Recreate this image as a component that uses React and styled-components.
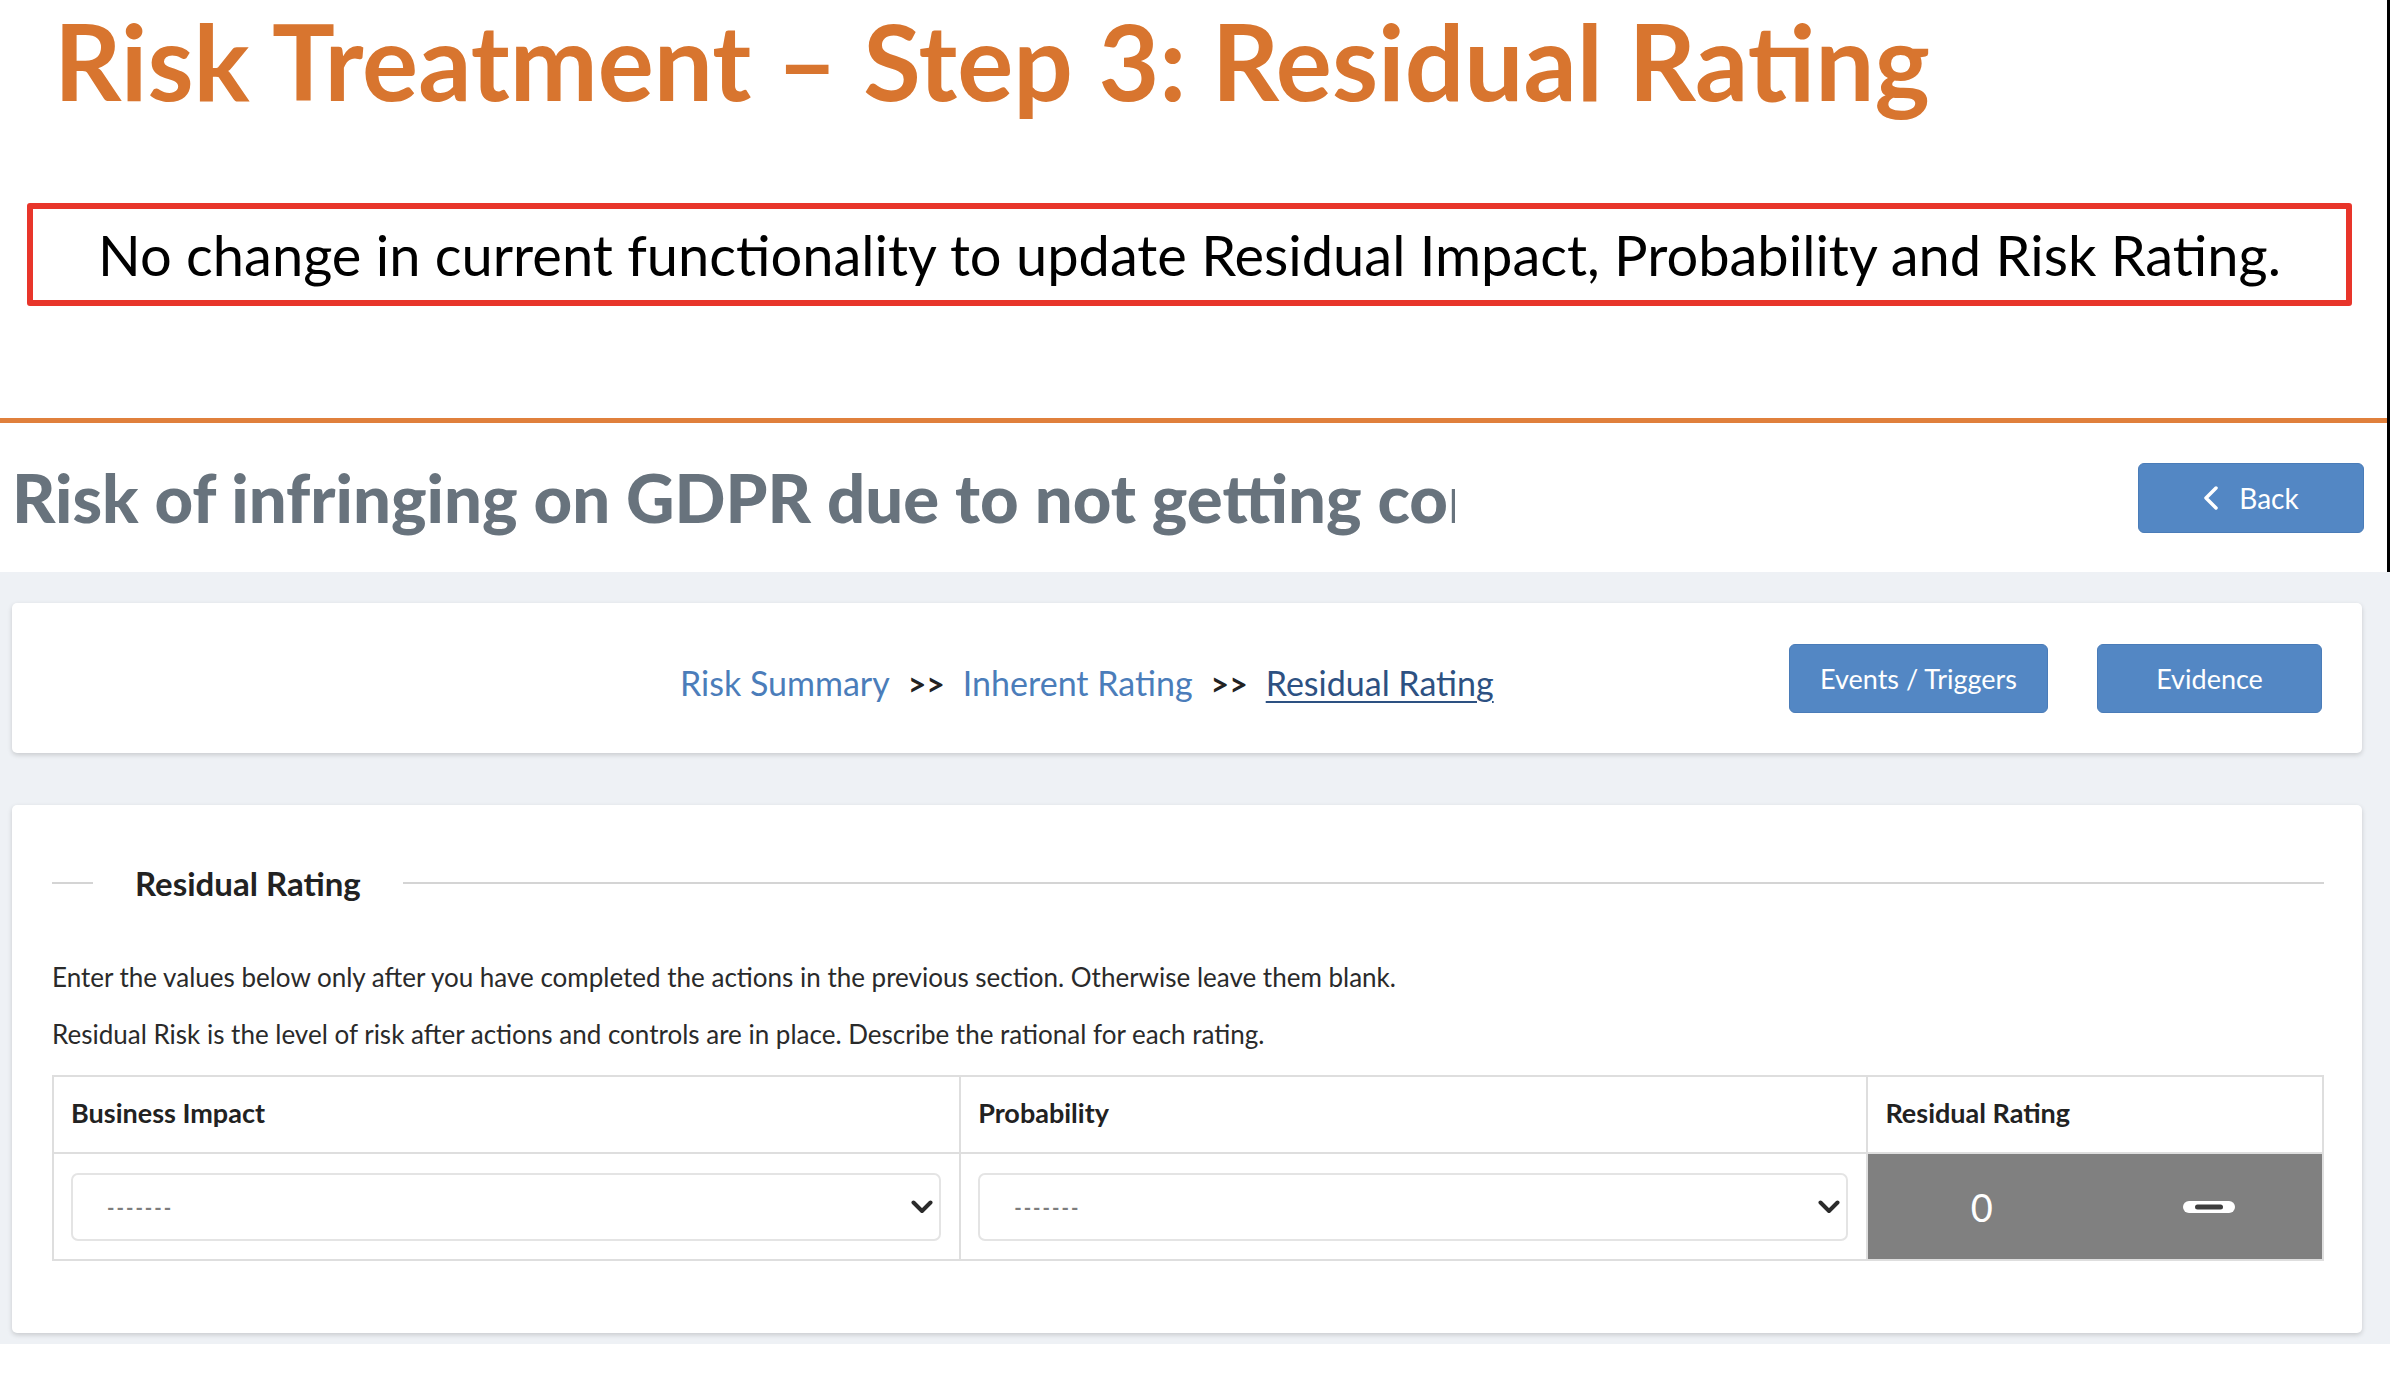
import React from 'react';
import styled, { createGlobalStyle } from 'styled-components';

const GlobalStyle = createGlobalStyle`
  html, body {
    margin: 0;
    padding: 0;
    background: #ffffff;
  }
  body {
    font-family: Lato, "Liberation Sans", sans-serif;
    color: #222;
  }
`;

const Top = styled.div`
  border-right: 3px solid #000;
`;

const Slide = styled.section`
  height: 423px;
  box-sizing: border-box;
  padding-top: 8px;
  border-bottom: 5px solid #e0803c;
`;

const SlideTitle = styled.h1`
  margin: 0 0 0 54px;
  font-size: 105px;
  line-height: 1;
  font-weight: 700;
  color: #d8752f;
  white-space: nowrap;
`;

const NoteBox = styled.div`
  margin: 90px 35px 0 27px;
  height: 103px;
  box-sizing: border-box;
  border: 6px solid #e8352a;
  border-radius: 3px;
  display: flex;
  align-items: center;
  justify-content: center;
  font-size: 56px;
  line-height: 1;
  color: #000;
  white-space: nowrap;
`;

const PageHeader = styled.header`
  height: 149px;
  display: flex;
  align-items: center;
  padding: 0 23px 0 12px;
`;

const RiskTitle = styled.h2`
  margin: 0;
  width: 1443px;
  overflow: hidden;
  white-space: nowrap;
  font-size: 67px;
  line-height: 1.2;
  font-weight: 900;
  color: #68737d;
`;

const Button = styled.button`
  display: flex;
  align-items: center;
  justify-content: center;
  gap: ${p => p.gap || 0}px;
  width: ${p => p.w}px;
  height: ${p => p.h}px;
  margin-left: ${p => (p.ml === 'auto' ? 'auto' : `${p.ml || 0}px`)};
  border: 1px solid #4a7cb8;
  border-radius: 6px;
  background: #5387c4;
  color: #fff;
  font-family: Lato, "Liberation Sans", sans-serif;
  font-size: ${p => p.fs || 27}px;
  padding: 0;
  cursor: pointer;
`;

const Band = styled.main`
  background: #eef1f5;
  padding: 31px 28px 11px 12px;
`;

const Card = styled.div`
  background: #fff;
  border-radius: 5px;
  box-shadow: 0 2px 5px rgba(0, 0, 0, 0.16);
  box-sizing: border-box;
  height: ${p => p.h}px;
  margin-top: ${p => p.mt || 0}px;
`;

const NavCard = styled(Card)`
  display: flex;
  align-items: center;
  padding: 0 40px 0 668px;
`;

const Crumbs = styled.nav`
  display: flex;
  align-items: baseline;
  gap: 18px;
  font-size: 34px;
  margin-top: 8px;
`;

const Crumb = styled.a`
  color: ${p => (p.active ? '#2d5182' : '#4b7dba')};
  text-decoration: ${p => (p.active ? 'underline' : 'none')};
  text-underline-offset: 5px;
  text-decoration-thickness: 2px;
  cursor: pointer;
`;

const Sep = styled.span`
  color: #222;
  font-size: 32px;
  font-weight: 700;
`;

const RatingCard = styled(Card)`
  padding: 54px 38px 0 40px;
`;

const Legend = styled.div`
  display: flex;
  align-items: center;
  height: 48px;
`;

const Rule = styled.div`
  height: 2px;
  background: #d4d4d4;
  width: ${p => (p.w ? `${p.w}px` : 'auto')};
  flex: ${p => (p.w ? 'none' : 1)};
`;

const LegendTitle = styled.h3`
  margin: 0 42px;
  font-size: 33px;
  font-weight: 700;
  color: #222;
`;

const Note = styled.p`
  margin: ${p => p.mt}px 0 0;
  font-size: 26px;
  line-height: 1;
  color: #2a2a2a;
`;

const Grid = styled.div`
  margin-top: 28px;
  display: grid;
  grid-template-columns: 2fr 2fr 1fr;
  grid-template-rows: 77px 105px;
  border: 2px solid #dedede;
`;

const HeadCell = styled.div`
  display: flex;
  align-items: center;
  padding: 0 0 4px 17px;
  font-size: 27px;
  font-weight: 700;
  color: #222;
  border-bottom: 2px solid #dedede;
  border-right: ${p => (p.last ? 'none' : '2px solid #dedede')};
`;

const Cell = styled.div`
  display: flex;
  align-items: center;
  padding: 0 18px 0 17px;
  border-right: 2px solid #dedede;
`;

const Select = styled.div`
  flex: 1;
  height: 68px;
  box-sizing: border-box;
  border: 2px solid #e4e4e4;
  border-radius: 7px;
  display: flex;
  align-items: center;
  justify-content: space-between;
  padding: 0 6px 0 34px;
`;

const Placeholder = styled.span`
  color: #7d7d7d;
  font-size: 20px;
  font-weight: 700;
  letter-spacing: 2px;
`;

const Score = styled.div`
  background: #808080;
  display: grid;
  grid-template-columns: 1fr 1fr;
  align-items: center;
  justify-items: center;
  color: #fff;
  font-size: 38px;
`;

const ChevronDown = () => (
  <svg width="22" height="14" viewBox="0 0 22 14">
    <polyline points="2.5,2.5 11,11 19.5,2.5" fill="none" stroke="#2b2b2b" strokeWidth="4" strokeLinecap="round" strokeLinejoin="round" />
  </svg>
);

const ChevronLeft = () => (
  <svg width="16" height="26" viewBox="0 0 16 26">
    <polyline points="13,3 3,13 13,23" fill="none" stroke="#fff" strokeWidth="3.5" strokeLinecap="round" strokeLinejoin="round" />
  </svg>
);

const DashBadge = () => (
  <svg width="54" height="14" viewBox="0 0 54 14">
    <rect x="1" y="1" width="52" height="12" rx="6" fill="#fff" />
    <rect x="13" y="4.5" width="28" height="5" rx="2.5" fill="#3d3d3d" />
  </svg>
);

export default function App() {
  return (
    <>
      <GlobalStyle />
      <Top>
        <Slide>
          <SlideTitle>Risk Treatment – Step 3: Residual Rating</SlideTitle>
          <NoteBox>No change in current functionality to update Residual Impact, Probability and Risk Rating.</NoteBox>
        </Slide>
        <PageHeader>
          <RiskTitle>Risk of infringing on GDPR due to not getting consent</RiskTitle>
          <Button w={226} h={70} ml="auto" gap={20} fs={28}>
            <ChevronLeft />
            Back
          </Button>
        </PageHeader>
      </Top>
      <Band>
        <NavCard h={150}>
          <Crumbs>
            <Crumb>Risk Summary</Crumb>
            <Sep>&gt;&gt;</Sep>
            <Crumb>Inherent Rating</Crumb>
            <Sep>&gt;&gt;</Sep>
            <Crumb active>Residual Rating</Crumb>
          </Crumbs>
          <Button w={259} h={69} ml="auto">Events / Triggers</Button>
          <Button w={225} h={69} ml={49}>Evidence</Button>
        </NavCard>
        <RatingCard h={528} mt={52}>
          <Legend>
            <Rule w={41} />
            <LegendTitle>Residual Rating</LegendTitle>
            <Rule />
          </Legend>
          <Note mt={57}>Enter the values below only after you have completed the actions in the previous section. Otherwise leave them blank.</Note>
          <Note mt={31}>Residual Risk is the level of risk after actions and controls are in place. Describe the rational for each rating.</Note>
          <Grid>
            <HeadCell>Business Impact</HeadCell>
            <HeadCell>Probability</HeadCell>
            <HeadCell last>Residual Rating</HeadCell>
            <Cell>
              <Select>
                <Placeholder>-------</Placeholder>
                <ChevronDown />
              </Select>
            </Cell>
            <Cell>
              <Select>
                <Placeholder>-------</Placeholder>
                <ChevronDown />
              </Select>
            </Cell>
            <Score>
              <span>0</span>
              <DashBadge />
            </Score>
          </Grid>
        </RatingCard>
      </Band>
    </>
  );
}
